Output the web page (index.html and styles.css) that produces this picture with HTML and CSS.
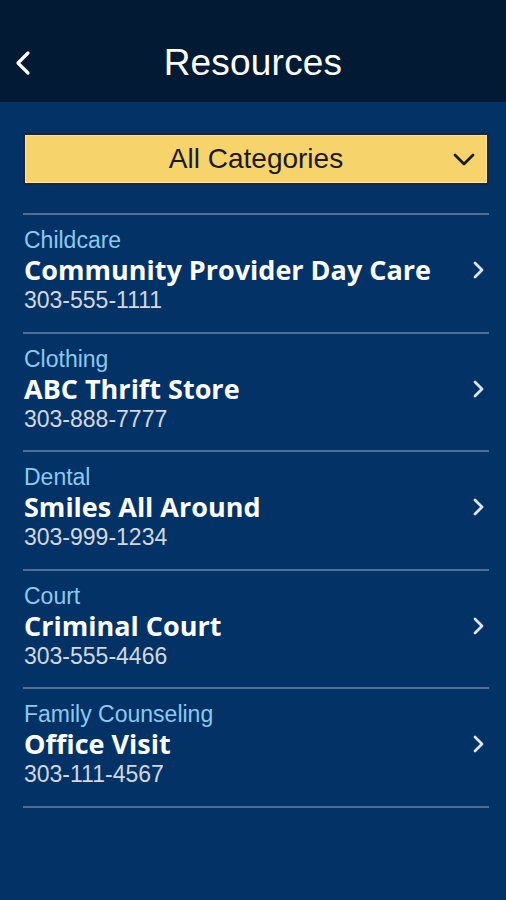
FILE: index.html
```html
<!DOCTYPE html>
<html lang="en">
<head>
  <meta charset="UTF-8">
  <meta name="viewport" content="width=device-width, initial-scale=1.0">
  <title>Resources</title>
  <link rel="stylesheet" href="styles.css">
</head>
<body>
  <div class="header">
    <a class="back" href="#">
      <svg width="18" height="26" viewBox="0 0 18 26"><path d="M14 3 L4 13 L14 23" fill="none" stroke="#fff" stroke-width="3.2" stroke-linecap="round" stroke-linejoin="round"/></svg>
    </a>
    <h1>Resources</h1>
  </div>

  <div class="content">
    <div class="dropdown">
      <span>All Categories</span>
      <svg class="caret" width="26" height="16" viewBox="0 0 26 16"><path d="M4 3 L13 12 L22 3" fill="none" stroke="#1a1a22" stroke-width="2.8" stroke-linecap="round" stroke-linejoin="round"/></svg>
    </div>

    <ul class="list">
      <li class="item">
        <div class="info">
          <p class="category">Childcare</p>
          <p class="name">Community Provider Day Care</p>
          <p class="phone">303-555-1111</p>
        </div>
        <svg class="arrow" width="14" height="20" viewBox="0 0 14 20"><path d="M4 3 L11 10 L4 17" fill="none" stroke="#dfe3ea" stroke-width="2.8" stroke-linecap="round" stroke-linejoin="round"/></svg>
      </li>
      <li class="item">
        <div class="info">
          <p class="category">Clothing</p>
          <p class="name">ABC Thrift Store</p>
          <p class="phone">303-888-7777</p>
        </div>
        <svg class="arrow" width="14" height="20" viewBox="0 0 14 20"><path d="M4 3 L11 10 L4 17" fill="none" stroke="#dfe3ea" stroke-width="2.8" stroke-linecap="round" stroke-linejoin="round"/></svg>
      </li>
      <li class="item">
        <div class="info">
          <p class="category">Dental</p>
          <p class="name">Smiles All Around</p>
          <p class="phone">303-999-1234</p>
        </div>
        <svg class="arrow" width="14" height="20" viewBox="0 0 14 20"><path d="M4 3 L11 10 L4 17" fill="none" stroke="#dfe3ea" stroke-width="2.8" stroke-linecap="round" stroke-linejoin="round"/></svg>
      </li>
      <li class="item">
        <div class="info">
          <p class="category">Court</p>
          <p class="name">Criminal Court</p>
          <p class="phone">303-555-4466</p>
        </div>
        <svg class="arrow" width="14" height="20" viewBox="0 0 14 20"><path d="M4 3 L11 10 L4 17" fill="none" stroke="#dfe3ea" stroke-width="2.8" stroke-linecap="round" stroke-linejoin="round"/></svg>
      </li>
      <li class="item">
        <div class="info">
          <p class="category">Family Counseling</p>
          <p class="name">Office Visit</p>
          <p class="phone">303-111-4567</p>
        </div>
        <svg class="arrow" width="14" height="20" viewBox="0 0 14 20"><path d="M4 3 L11 10 L4 17" fill="none" stroke="#dfe3ea" stroke-width="2.8" stroke-linecap="round" stroke-linejoin="round"/></svg>
      </li>
    </ul>
  </div>
</body>
</html>
```

FILE: styles.css
```css
body {
  margin: 0;
  height: 900px;
  background-color: #033366;
  font-family: "Liberation Sans", Arial, sans-serif;
  color: #fff;
}

.header {
  box-sizing: border-box;
  height: 102px;
  padding-top: 24px;
  background-color: #021a33;
  display: flex;
  align-items: center;
  justify-content: center;
  position: relative;
}

.header h1 {
  margin: 0;
  font-size: 37px;
  font-weight: normal;
  letter-spacing: 0.2px;
}

.back {
  position: absolute;
  left: 14px;
  top: 50px;
  display: block;
  line-height: 0;
}

.content {
  padding: 31px 17px 0 23px;
}

.dropdown {
  height: 48px;
  background-color: #f6d46b;
  border: 2px solid #1b2540;
  box-shadow: inset 0 0 0 1px #f9e49a;
  display: flex;
  align-items: center;
  justify-content: center;
  position: relative;
  color: #1a1a22;
  font-size: 28px;
}

.dropdown .caret {
  position: absolute;
  right: 10px;
  top: 17px;
}

.list {
  list-style: none;
  margin: 28px 0 0 0;
  padding: 0;
  border-top: 2px solid #4e6e96;
}

.item {
  display: flex;
  align-items: center;
  justify-content: space-between;
  padding: 10px 0 16.6px 1px;
  border-bottom: 2px solid #4e6e96;
}

.info p {
  margin: 0;
  line-height: 30px;
}

.category {
  font-size: 23px;
  color: #8ec8ef;
}

.name {
  font-family: "Open Sans", "DejaVu Sans", sans-serif;
  font-weight: bold;
  font-size: 27px;
  color: #fff;
}

.phone {
  font-size: 23px;
  color: #d3d7de;
}

.arrow {
  margin-right: 4px;
}
```
